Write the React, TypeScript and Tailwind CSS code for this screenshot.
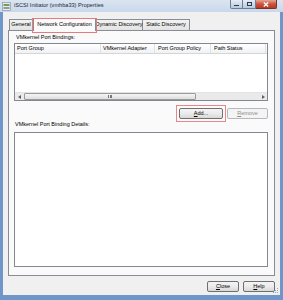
import React from 'react';

// ── Small pieces ──────────────────────────────────────────────────────

function WinButton({ children, className = '', disabled = false }: { children: React.ReactNode; className?: string; disabled?: boolean }) {
  return (
    <div
      className={`h-[11px] flex items-center justify-center rounded-[2px] border ${
        disabled
          ? 'border-[#b5b9bd] bg-[#f4f4f4] text-[#8d8d8d]'
          : 'border-[#707070] bg-gradient-to-b from-[#f4f4f4] via-[#ebebeb] to-[#d8d8d8] text-black'
      } ${className}`}
    >
      {children}
    </div>
  );
}

function Tab({ label, selected = false, className = '' }: { label: string; selected?: boolean; className?: string }) {
  if (selected) {
    return (
      <div className={`relative h-[13px] -mb-px flex items-center justify-center whitespace-nowrap bg-[#fafafa] border border-b-0 border-[#898c95] z-10 ${className}`}>
        {label}
        <span className="absolute -left-[2px] -right-[2px] -top-[1px] -bottom-[2px] border border-[#e57a7f]" />
      </div>
    );
  }
  return (
    <div className={`h-[11px] flex items-center justify-center whitespace-nowrap bg-gradient-to-b from-[#f3f3f3] to-[#e3e3e3] border border-b-0 border-[#898c95] ${className}`}>
      {label}
    </div>
  );
}

// ── App ───────────────────────────────────────────────────────────────

export default function App() {
  return (
    <div className="w-[283px] h-[300px] bg-[#6f96c9] flex flex-col overflow-hidden whitespace-nowrap font-['Liberation_Sans',Arial,sans-serif] text-[5.5px] leading-none text-black">
      {/* Title bar */}
      <div className="h-[12px] flex items-start bg-gradient-to-b from-[#dbe5f1] to-[#c8d8ec] pl-[2px] pr-[6px]">
        <svg width="9" height="9" viewBox="0 0 9 9" className="mt-[2px]">
          <rect x="0.5" y="0.5" width="8" height="8" fill="#e8ecef" stroke="#7c8a96" strokeWidth="0.6" />
          <rect x="1.5" y="2" width="6" height="2" fill="#6fa052" />
          <rect x="1.5" y="5" width="6" height="2" fill="#8e9aa4" />
        </svg>
        <span className="ml-[3px] mt-[3px] text-[5.6px] text-[#1c2634]">iSCSI Initiator (vmhba33) Properties</span>
        <div className="ml-auto flex">
          <div className="w-[13px] h-[9px] border border-[#6e7f93] border-t-0 rounded-bl-[2px] bg-gradient-to-b from-[#e6edf5] to-[#b9c9dc] flex items-end justify-center pb-[2px]">
            <div className="w-[5px] h-[1.5px] bg-[#2b3a4c]" />
          </div>
          <div className="w-[13px] h-[9px] border border-l-0 border-[#6e7f93] border-t-0 bg-gradient-to-b from-[#e6edf5] to-[#b9c9dc] flex items-center justify-center">
            <div className="w-[5px] h-[4px] border border-t-[1.5px] border-[#2b3a4c]" />
          </div>
          <div className="w-[21px] h-[9px] border border-l-0 border-[#7a3226] border-t-0 rounded-br-[2px] bg-gradient-to-b from-[#e8a393] via-[#c9553f] to-[#b83a22] flex items-center justify-center">
            <svg width="6" height="5" viewBox="0 0 6 5">
              <path d="M0.8 0.5 L5.2 4.5 M5.2 0.5 L0.8 4.5" stroke="#fff" strokeWidth="1.3" />
            </svg>
          </div>
        </div>
      </div>

      {/* Dialog body */}
      <div className="relative flex-1 mx-[3px] mb-[5px] bg-[#f0f0f0] flex flex-col pl-[5px]">
        {/* Tab strip */}
        <div className="h-[18px] flex items-end pl-[1px] text-[5.5px]">
          <Tab label="General" className="w-[24px]" />
          <Tab label="Network Configuration" selected className="w-[63px]" />
          <Tab label="Dynamic Discovery" className="w-[47px] border-l-0" />
          <Tab label="Static Discovery" className="w-[47px] border-l-0" />
        </div>

        {/* Tab panel */}
        <div className="w-[267px] h-[246px] border border-[#898c95] bg-[#fafafa] flex flex-col pl-[5px]">
          <div className="mt-[4px] h-[6px] pl-[2px] flex items-center">VMkernel Port Bindings:</div>

          {/* Port binding list */}
          <div className="mt-[2px] w-[254px] h-[58px] border border-[#828790] bg-white flex flex-col">
            <div className="h-[10px] flex bg-gradient-to-b from-white to-[#f1f2f4] border-b border-[#d5d5d5]">
              <div className="w-[86px] pl-[2px] flex items-center border-r border-[#dfe2e6]">Port Group</div>
              <div className="w-[54px] pl-[2px] flex items-center border-r border-[#dfe2e6]">VMkernel Adapter</div>
              <div className="w-[56px] pl-[3px] flex items-center border-r border-[#dfe2e6]">Port Group Policy</div>
              <div className="w-[55px] pl-[3px] flex items-center border-r border-[#dfe2e6]">Path Status</div>
            </div>
            <div className="flex-1" />
            {/* Horizontal scrollbar */}
            <div className="h-[8px] flex bg-[#eaeaea] border-t border-[#e3e3e3]">
              <div className="w-[8px] flex items-center justify-center">
                <svg width="3" height="4" viewBox="0 0 3 4"><path d="M3 0 L0 2 L3 4 Z" fill="#606060" /></svg>
              </div>
              <div className="ml-[1px] w-[172px] rounded-[1px] border border-[#9a9a9a] bg-gradient-to-b from-[#f5f5f5] to-[#dedede] flex items-center justify-center">
                <div className="flex gap-[1px]">
                  <div className="w-[0.6px] h-[3px] bg-[#777]" />
                  <div className="w-[0.6px] h-[3px] bg-[#777]" />
                  <div className="w-[0.6px] h-[3px] bg-[#777]" />
                </div>
              </div>
              <div className="flex-1" />
              <div className="w-[8px] flex items-center justify-center">
                <svg width="3" height="4" viewBox="0 0 3 4"><path d="M0 0 L3 2 L0 4 Z" fill="#606060" /></svg>
              </div>
            </div>
          </div>

          {/* Add / Remove */}
          <div className="mt-[7px] w-[254px] flex justify-end gap-[4px]">
            <div className="relative">
              <WinButton className="w-[44px]">
                <span><span className="underline">A</span>dd...</span>
              </WinButton>
              <span className="absolute -left-[3px] -right-[3px] -top-[3px] -bottom-[3px] border border-[#e8868a]" />
            </div>
            <WinButton disabled className="w-[41px]">
              <span><span className="underline">R</span>emove</span>
            </WinButton>
          </div>

          <div className="mt-[3px] h-[6px] pl-[1px] flex items-center">VMkernel Port Binding Details:</div>

          {/* Details box */}
          <div className="mt-[4px] w-[254px] h-[135px] border border-[#828790] bg-white" />
        </div>

        {/* Footer buttons */}
        <div className="mt-[5px] w-[267px] flex justify-end gap-[4px]">
          <WinButton className="w-[32px]">
            <span><span className="underline">C</span>lose</span>
          </WinButton>
          <WinButton className="w-[32px]">
            <span><span className="underline">H</span>elp</span>
          </WinButton>
        </div>

        {/* Resize grip */}
        <svg width="7" height="7" viewBox="0 0 7 7" className="absolute right-[1px] bottom-[1px]">
          <rect x="5" y="1" width="1" height="1" fill="#9aa5b1" />
          <rect x="3" y="3" width="1" height="1" fill="#9aa5b1" />
          <rect x="5" y="3" width="1" height="1" fill="#9aa5b1" />
          <rect x="1" y="5" width="1" height="1" fill="#9aa5b1" />
          <rect x="3" y="5" width="1" height="1" fill="#9aa5b1" />
          <rect x="5" y="5" width="1" height="1" fill="#9aa5b1" />
        </svg>
      </div>
    </div>
  );
}
